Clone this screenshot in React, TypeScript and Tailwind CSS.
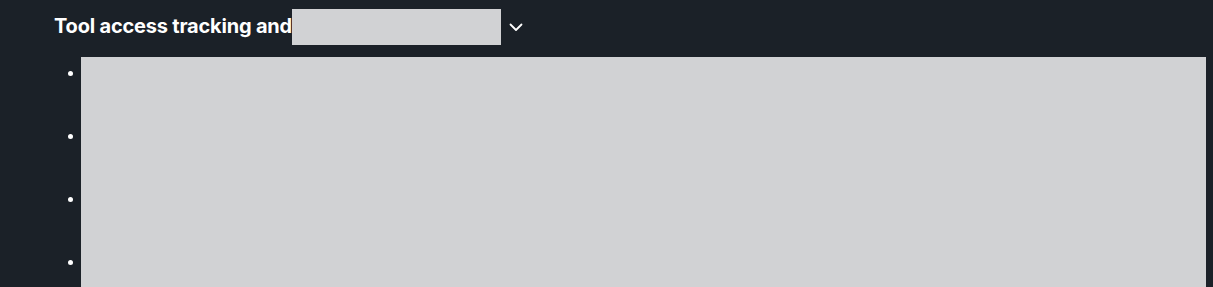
export default function App() {
  const items = [0, 1, 2, 3];

  return (
    <div
      className="h-[287px] overflow-hidden bg-[#1b2128] text-white pl-[54px] pr-[7px] pt-[9px]"
      style={{ fontFamily: "Inter, 'Noto Sans', sans-serif" }}
    >
      <div className="flex items-center h-[36px]">
        <h2 className="text-[20px] font-bold leading-[36px] tracking-[-0.2px] -mt-[3px]">Tool access tracking and</h2>
        <div className="w-[209px] h-[36px] bg-[#d1d2d4]" />
        <svg className="ml-[8px] mt-[1px]" width="14" height="9" viewBox="0 0 14 9" fill="none">
          <path d="M1.5 1.5l5.5 5.5 5.5-5.5" stroke="white" strokeWidth="1.8" strokeLinecap="round" strokeLinejoin="round" />
        </svg>
      </div>

      <ul className="mt-[12px]">
        {items.map((i) => (
          <li key={i} className="flex">
            <div className="w-[27px] shrink-0 pl-[14px] pt-[14px]">
              <div className="w-[5px] h-[5px] rounded-full bg-white" />
            </div>
            <div className="flex-1 h-[63px] bg-[#d1d2d4]" />
          </li>
        ))}
      </ul>
    </div>
  );
}
